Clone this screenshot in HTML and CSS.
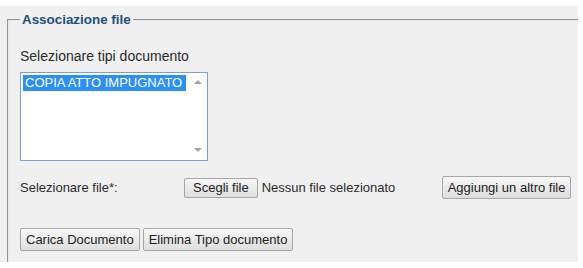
FILE: index.html
```html
<!DOCTYPE html>
<html lang="it">
<head>
  <meta charset="UTF-8">
  <title>Associazione file</title>
  <link rel="stylesheet" href="styles.css">
</head>
<body>
  <div class="panel">
    <fieldset class="assoc">
      <legend>Associazione file</legend>

      <div class="label-top">Selezionare tipi documento</div>
      <div class="listbox">
        <div class="options">
          <div class="option selected">COPIA ATTO IMPUGNATO</div>
        </div>
        <div class="scrollbar">
          <span class="arrow up"></span>
          <span class="arrow down"></span>
        </div>
      </div>

      <div class="file-row">
        <span class="file-label">Selezionare file*:</span>
        <button class="btn small">Scegli file</button>
        <span class="file-name">Nessun file selezionato</span>
        <button class="btn add">Aggiungi un altro file</button>
      </div>

      <div class="actions">
        <button class="btn">Carica Documento</button>
        <button class="btn">Elimina Tipo documento</button>
      </div>
    </fieldset>
  </div>
</body>
</html>
```

FILE: styles.css
```css
body {
  margin: 0;
  background: #fff;
  font-family: "Liberation Sans", Arial, sans-serif;
  font-size: 13px;
  color: #2a2a2a;
}
.panel {
  margin-top: 6px;
  width: 578px;
  height: 256px;
  background: #f0f0f0;
  overflow: hidden;
}
.assoc {
  margin: 6px 0 0 7px;
  padding: 0 0 40px 11px;
  width: 600px;
  border: 2px groove #e8e8e8;
  border-right: none;
  min-width: 0;
}
.assoc legend {
  padding: 0 2px;
  font-size: 13.4px;
  font-weight: bold;
  color: #1d4f7c;
  line-height: 16px;
}
.label-top {
  margin-top: 20px;
  font-size: 14px;
  line-height: 16px;
}
.listbox {
  margin-top: 8px;
  width: 186px;
  height: 87px;
  border: 1px solid #7b9fd6;
  background: #fff;
  display: flex;
}
.options {
  flex: 1;
  padding: 2px 0 0 2px;
}
.option {
  line-height: 16px;
  padding-left: 2px;
  color: #000;
}
.option.selected {
  background: #2a8ff7;
  color: #fff;
  width: 161px;
}
.scrollbar {
  width: 19px;
  display: flex;
  flex-direction: column;
  justify-content: space-between;
  align-items: center;
  padding: 7px 0 8px;
}
.arrow {
  width: 0;
  height: 0;
  border-left: 4px solid transparent;
  border-right: 4px solid transparent;
}
.arrow.up {
  border-bottom: 4px solid #a3a3a3;
}
.arrow.down {
  border-top: 4px solid #a3a3a3;
}
.file-row {
  display: flex;
  align-items: center;
  margin-top: 14px;
  height: 25px;
}
.file-label {
  width: 164px;
}
.file-name {
  margin-left: 4px;
  width: 180px;
}
.btn {
  font-family: "Liberation Sans", Arial, sans-serif;
  font-size: 13px;
  color: #222;
  height: 23px;
  padding: 0 5px;
  border: 1px solid #a6a6a6;
  border-radius: 2px;
  background: linear-gradient(to bottom, #f7f7f7, #dedede);
}
.btn.small {
  height: 20px;
  padding: 0 8px;
}
.actions {
  display: flex;
  gap: 3px;
  margin-top: 28px;
}
```
